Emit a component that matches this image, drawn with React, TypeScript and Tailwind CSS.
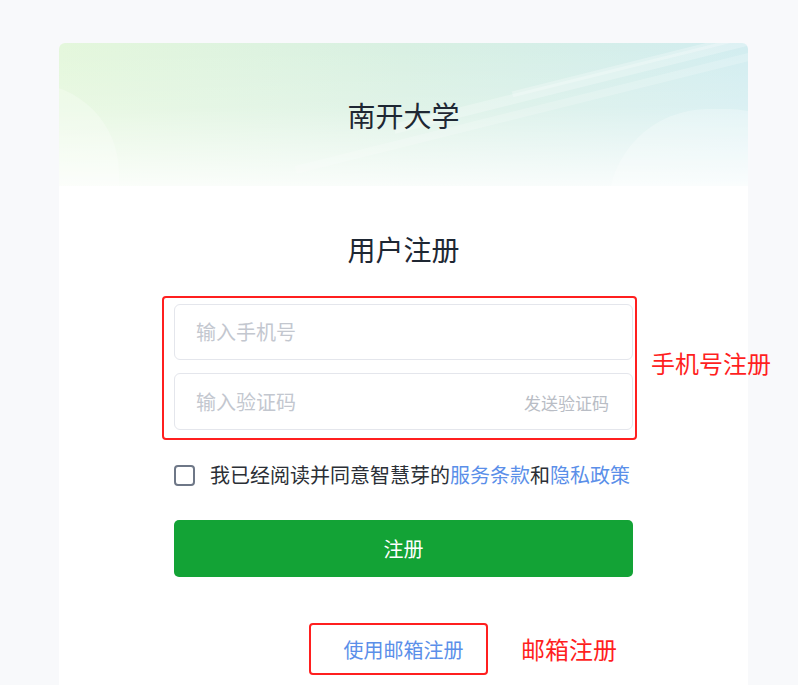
import React from "react";

const font = { fontFamily: '"Noto Sans CJK SC", "Noto Sans", sans-serif' };

export default function App() {
  return (
    <div
      className="relative min-h-[685px] w-[798px] overflow-hidden bg-[#f8f9fb] pt-[43px]"
      style={font}
    >
      <div className="ml-[59px] h-[642px] w-[689px] rounded-t-[6px] bg-white">
        {/* header */}
        <div className="relative flex h-[143px] items-center justify-center overflow-hidden rounded-t-[6px] bg-[linear-gradient(to_bottom,rgba(255,255,255,0)_0%,rgba(255,255,255,0.2)_45%,rgba(255,255,255,0.85)_100%),linear-gradient(to_right,#e4f7dc_0%,#d8f0e2_50%,#d2edf0_100%)]">
          <div className="absolute -left-[120px] top-[40px] h-[220px] w-[180px] rounded-full bg-white/25" />
          <div className="absolute -right-[80px] top-[66px] h-[200px] w-[220px] rounded-full bg-white/25" />
          <div className="absolute right-[-60px] top-[30px] h-[10px] w-[420px] -rotate-[14deg] bg-white/25" />
          <div className="absolute right-[-60px] top-[60px] h-[8px] w-[520px] -rotate-[14deg] bg-white/20" />
          <div className="absolute right-[-60px] top-[12px] h-[6px] w-[300px] -rotate-[14deg] bg-white/25" />
          <h1 className="relative text-[28px] font-normal leading-[40px] text-[#1e2733]">南开大学</h1>
        </div>

        {/* body */}
        <div className="mx-auto w-[459px]">
          <h2 className="mt-[43px] text-center text-[28px] font-normal leading-[40px] text-[#1e2733]">
            用户注册
          </h2>

          <div className="relative mt-[35px] flex flex-col gap-[13px]">
            <div className="flex h-[56px] items-center rounded-[6px] border border-[#e4e6ec] px-[21px] text-[20px] text-[#c3c7cf]">
              输入手机号
            </div>
            <div className="flex h-[57px] items-center justify-between rounded-[6px] border border-[#e4e6ec] pl-[21px] pr-[23px]">
              <span className="text-[20px] text-[#c3c7cf]">输入验证码</span>
              <span className="mt-[2px] text-[17px] text-[#b9bdc5]">发送验证码</span>
            </div>
            {/* annotation */}
            <div className="pointer-events-none absolute -left-[12px] -right-[4px] -top-[8px] -bottom-[10px] rounded-[4px] border-[2px] border-[#ff1f1f]" />
            <div className="pointer-events-none absolute left-[477px] top-[43px] whitespace-nowrap text-[24px] leading-[32px] text-[#ff1f1f]">
              手机号注册
            </div>
          </div>

          <div className="mt-[31px] flex items-center">
            <div className="h-[21px] w-[21px] rounded-[4px] border-[2px] border-[#6e7787]" />
            <span className="ml-[15px] whitespace-nowrap text-[20px] leading-[28px] text-[#2b2f36]">
              我已经阅读并同意智慧芽的<span className="text-[#5b8fe9]">服务条款</span>和
              <span className="text-[#5b8fe9]">隐私政策</span>
            </span>
          </div>

          <button className="mt-[31px] flex h-[57px] w-full items-center justify-center rounded-[5px] bg-[#13a336] text-[20px] text-white">
            注册
          </button>

          <div className="relative mt-[59px] flex justify-center">
            <span className="text-[20px] leading-[28px] text-[#5b8fe9]">使用邮箱注册</span>
            <div className="pointer-events-none absolute left-[135px] -top-[13px] h-[52px] w-[179px] rounded-[4px] border-[2px] border-[#ff1f1f]" />
            <div className="pointer-events-none absolute left-[347px] -top-[3px] whitespace-nowrap text-[24px] leading-[32px] text-[#ff1f1f]">
              邮箱注册
            </div>
          </div>
        </div>
      </div>
    </div>
  );
}
